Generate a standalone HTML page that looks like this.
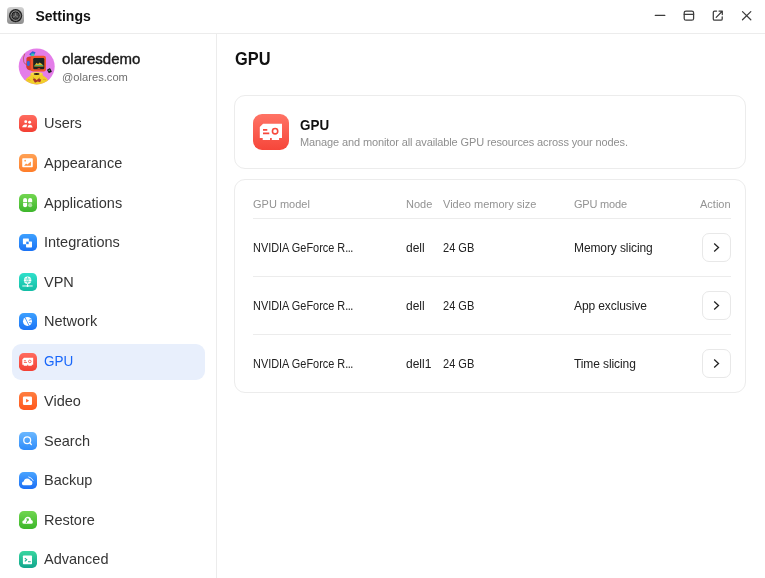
<!DOCTYPE html>
<html><head><meta charset="utf-8">
<style>
*{box-sizing:border-box;margin:0;padding:0}
html,body{width:765px;height:578px;overflow:hidden;background:#fff;font-family:"Liberation Sans",sans-serif;color:#1f1f1f}
#root{position:absolute;left:0;top:0;width:765px;height:578px;background:#fff;will-change:transform;overflow:hidden}
svg{position:absolute;overflow:visible}
#hdrline{position:absolute;left:0;top:33px;width:765px;height:1px;background:#ececec}
#sideline{position:absolute;left:216px;top:34px;width:1px;height:544px;background:#ececec}
#title{position:absolute;left:35.5px;top:7px;font-size:14px;font-weight:bold;color:#111;line-height:18px}
.uname{position:absolute;left:62px;top:50px;font-size:15px;color:#1a1a1a;line-height:18px;-webkit-text-stroke:0.4px #1a1a1a}
.udom{position:absolute;left:62px;top:70.3px;font-size:11.5px;color:#6e6e6e;line-height:14px;transform:scaleX(0.97);transform-origin:0 0}
.item{position:absolute;left:11.5px;width:193.5px;height:36px;border-radius:9px}
.item.sel{background:#e8effc}
.ic{position:absolute;left:7.5px;top:9.6px;width:17.6px;height:17.6px;border-radius:4.8px;overflow:hidden}
.ic svg{left:0;top:0;width:17.6px;height:17.6px}
.item .tx{position:absolute;left:32.5px;top:9.2px;font-size:14.5px;line-height:18px;color:#353535}
.item.sel .tx{color:#1766fa;top:8.9px;transform:scaleX(0.93);transform-origin:0 0}
.h1{position:absolute;left:235px;top:48px;font-size:18px;font-weight:bold;line-height:22px;color:#111;transform:scaleX(0.91);transform-origin:0 0}
.card{position:absolute;left:234px;width:512px;border:1px solid #ececec;border-radius:11px;background:#fff}
.gpuic{position:absolute;left:253px;top:114px;width:36px;height:36px;border-radius:9px;background:linear-gradient(#ff7365,#f6463a);overflow:hidden}
.ct{position:absolute;left:300px;top:116.5px;font-size:14px;font-weight:bold;line-height:17px;color:#111;transform:scaleX(0.96);transform-origin:0 0}
.cd{position:absolute;left:300px;top:135px;font-size:11px;line-height:14px;color:#8f8f8f;letter-spacing:-0.12px}
.th{position:absolute;font-size:11px;color:#939393;line-height:14px;top:197px}
.td{position:absolute;font-size:12px;color:#222;line-height:15px}
.nv{transform:scaleX(0.91);transform-origin:0 0}
.dots{letter-spacing:-0.6px}
.hl{position:absolute;left:253px;width:478px;height:1px;background:#ececec}
.btn{position:absolute;left:702px;width:29px;height:29px;border:1px solid #e8e8e8;border-radius:7px}
.btn svg{left:-1px;top:-1px;width:29px;height:29px}
</style></head><body>
<div id="root">
<div id="hdrline"></div>
<div id="sideline"></div>

<!-- app icon -->
<svg style="left:7px;top:7px" width="17" height="17" viewBox="0 0 17 17">
  <defs><linearGradient id="gapp" x1="0" y1="0" x2="0" y2="1"><stop offset="0" stop-color="#d4d4d4"/><stop offset="1" stop-color="#8c8c8c"/></linearGradient></defs>
  <rect x="0" y="0" width="17" height="17" rx="3.5" fill="url(#gapp)"/>
  <circle cx="8.6" cy="8.6" r="6.6" fill="#1a1a1a"/>
  <circle cx="8.6" cy="8.6" r="5.9" fill="none" stroke="#5a5a5a" stroke-width="0.6" stroke-dasharray="0.6 1"/>
  <circle cx="8.6" cy="8.6" r="4.7" fill="none" stroke="#b5b5b5" stroke-width="0.9"/>
  <circle cx="8.6" cy="8.6" r="3.2" fill="#4a4a4a"/>
  <path d="M8.6 8.6 L8.6 5.6 M8.6 8.6 L11.2 10.1 M8.6 8.6 L6 10.1" stroke="#9a9a9a" stroke-width="0.7"/>
  </svg>
<div id="title">Settings</div>

<!-- window controls -->
<svg style="left:650px;top:5px" width="110" height="22" viewBox="650 5 110 22" fill="none" stroke="#3d3d3d" stroke-width="1.25" stroke-linecap="round" stroke-linejoin="round">
  <path d="M655.3 15.4 H664.8"/>
  <rect x="684.2" y="11" width="9.4" height="9.2" rx="1.8"/>
  <path d="M684.2 14.3 H693.6"/>
  <path d="M716.6 11 H714.6 Q713.3 11 713.3 12.3 V18.9 Q713.3 20.2 714.6 20.2 H720.9 Q722.2 20.2 722.2 18.9 V16.8"/>
  <path d="M716.2 17.4 L722.2 11.2 M719 11.1 H722.3 V14.5"/>
  <path d="M742.5 11.6 L750.8 19.8 M750.8 11.6 L742.5 19.8"/>
</svg>

<!-- avatar -->
<svg style="left:17px;top:46px" width="40" height="40" viewBox="0 0 40 40">
  <defs><clipPath id="avc"><circle cx="19.7" cy="20.4" r="18"/></clipPath></defs>
  <circle cx="19.7" cy="20.4" r="18" fill="#e47de9"/>
  <g clip-path="url(#avc)">
    <path d="M7.5 40 Q8 34 10 32 Q12 30.5 13.5 29.5 L13.6 27.6 Q19.5 25.8 25.6 27.6 L25.8 29.5 Q28 30.5 29.5 32 Q31.5 34 32 40 Z" fill="#f2cf2b"/>
    <path d="M10.5 34 Q12 33 13.5 34.5 M26 33.5 Q27.5 33 29 34" stroke="#c9a21c" stroke-width="0.6" fill="none"/>
    <ellipse cx="19.6" cy="27.6" rx="6" ry="1.6" fill="#f6dc48"/>
    <ellipse cx="19.6" cy="28" rx="3" ry="0.9" fill="#2d2410"/>
    <path d="M16.5 31.6 L17.6 33.8 M22.6 31.6 L21.8 33.8" stroke="#5a4a20" stroke-width="0.5"/>
    <path d="M15.8 33.2 L18 32.6 L19.6 34.2 L21.4 32.6 L24.2 33.4 L23.2 36.2 L20.6 35.4 L18 36.8 Z" fill="#a8342a"/>
    <path d="M7.8 7.6 Q5.6 12 6.8 16 Q7.6 18.5 10 18.5" stroke="#b0583a" stroke-width="0.7" fill="none"/>
    <path d="M9.5 12 Q10 10.8 13 10.5 L15 10.3 L15 24.5 L12.5 24.2 Q9.2 23.5 9.2 20 Z" fill="#d43a2c"/>
    <rect x="10" y="14.9" width="2.7" height="5" rx="1.1" fill="#2f6be0"/>
    <rect x="13.7" y="9.7" width="15.3" height="15.9" rx="2.4" fill="#f0562c"/>
    <rect x="16.2" y="12" width="11.1" height="11.3" rx="1.2" fill="#1d2420"/>
    <path d="M17.2 20 L19.6 16.8 L21 18 L22.6 16.4 L24.6 17.8 L26.5 19.8 L26.5 20.4 L17.2 20.4 Z" fill="#e7b52a"/>
    <path d="M17.8 19.4 H26" stroke="#2fb07a" stroke-width="0.9"/>
    <rect x="20.6" y="22" width="2.6" height="0.8" fill="#e3352b"/>
    <path d="M12.2 8.2 L15.5 5.3 L18.6 6.2 L16.8 9.6 L13.5 9.6 Z" fill="#2d5fd6"/>
    <rect x="14.2" y="7.5" width="3" height="2.5" fill="#37c7b0"/>
    <rect x="30.6" y="22.6" width="3.6" height="4.2" rx="0.6" transform="rotate(-28 32.4 24.7)" fill="#1c1c1c"/>
    <rect x="31.6" y="23.8" width="1.6" height="1.2" transform="rotate(-28 32.4 24.7)" fill="#3da06a"/>
  </g>
</svg>
<div class="uname">olaresdemo</div>
<div class="udom">@olares.com</div>

<!-- menu -->
<div class="item" style="top:105.3px">
  <div class="ic" style="background:linear-gradient(#ff6b5f,#f33f33)"><svg viewBox="0 0 18 18" fill="#fff">
    <circle cx="6.9" cy="6.8" r="1.5"/><path d="M3.3 12.6 Q3.4 9.9 6.4 9.6 L7.6 9.6 Q8.6 9.8 8.2 10.6 L7.6 12.6 Z"/>
    <circle cx="10.9" cy="7.5" r="1.5"/><path d="M8.7 12.7 Q8.9 10.1 11.2 10.1 Q13.6 10.1 14 12.7 Z"/>
  </svg></div>
  <div class="tx">Users</div></div>
<div class="item" style="top:144.9px">
  <div class="ic" style="background:linear-gradient(#ffa154,#ff7e2a)"><svg viewBox="0 0 18 18">
    <rect x="3.3" y="4.4" width="10.8" height="9.1" rx="0.8" fill="#fff"/>
    <rect x="4.3" y="5.4" width="8.8" height="7.1" fill="#fff"/>
    <circle cx="6.3" cy="6.9" r="0.9" fill="#ffa04f"/>
    <path d="M5.2 11.9 L7.2 9.8 L8.6 10.8 L12.2 7.6 L12.2 11.9 Z" fill="#ff9240"/>
  </svg></div>
  <div class="tx">Appearance</div></div>
<div class="item" style="top:184.5px">
  <div class="ic" style="background:linear-gradient(#72d650,#3eb62c)"><svg viewBox="0 0 18 18" fill="#fff">
    <path d="M4.2 8.4 V6.2 Q4.2 4.2 6.2 4.2 Q8.3 4.2 8.3 6.2 V8.4 Z"/>
    <path d="M9.3 8.4 V6.2 Q9.3 4.2 11.4 4.2 Q13.5 4.2 13.5 6.2 V8.4 Z" transform="rotate(0)"/>
    <path d="M4.2 9.3 H8.3 V11.5 Q8.3 13.5 6.2 13.5 Q4.2 13.5 4.2 11.5 Z"/>
    <circle cx="11.4" cy="11.4" r="2.1" fill="#fff" fill-opacity="0.55"/>
  </svg></div>
  <div class="tx">Applications</div></div>
<div class="item" style="top:224.1px">
  <div class="ic" style="background:linear-gradient(#3da0ff,#1a72f5)"><svg viewBox="0 0 18 18">
    <rect x="4" y="4.6" width="6.1" height="6" rx="0.6" fill="#fff"/>
    <rect x="7.2" y="7.6" width="6.1" height="6.1" rx="0.6" fill="#fff"/>
    <rect x="7.4" y="7.8" width="2.5" height="2.6" fill="#2a86fa"/>
  </svg></div>
  <div class="tx">Integrations</div></div>
<div class="item" style="top:263.7px">
  <div class="ic" style="background:linear-gradient(#2fe0cb,#13bda4)"><svg viewBox="0 0 18 18">
    <circle cx="8.8" cy="7.5" r="3.8" fill="#fff"/>
    <path d="M8.8 4.2 Q7.2 7.5 8.8 10.8 Q10.4 7.5 8.8 4.2 M5.4 6.2 H12.2 M5.4 8.8 H12.2" stroke="#22cdb4" stroke-width="0.5" fill="none"/>
    <path d="M8.8 11 V13.2 M3.4 13.3 H14" stroke="#fff" stroke-width="1"/>
    <circle cx="8.8" cy="13.3" r="1" fill="#fff"/>
  </svg></div>
  <div class="tx">VPN</div></div>
<div class="item" style="top:303.3px">
  <div class="ic" style="background:linear-gradient(#3ca0ff,#1b73f5)"><svg viewBox="0 0 18 18">
    <circle cx="8.7" cy="8.6" r="4.6" fill="#fff"/>
    <path d="M6.2 4.7 L10.2 12.8 M10 7.5 L12.7 6.6 M10.4 9.6 L13 10.4" stroke="#2a86fa" stroke-width="0.8" fill="none"/>
  </svg></div>
  <div class="tx">Network</div></div>
<div class="item sel" style="top:343.6px">
  <div class="ic" style="background:linear-gradient(#ff6b5f,#f33f33)"><svg viewBox="0 0 36 36">
    <path d="M10.1 9.8 H29 V24 H26.1 V25.9 H18.8 V24 H17 V25.9 H9.7 V24 H6.8 V13.1 Z" fill="#fff"/>
    <path d="M10 15.9 H14.3 M10 19.3 H16.3" stroke="#f6493c" stroke-width="1.7"/>
    <circle cx="22.1" cy="17.2" r="2.65" fill="none" stroke="#f6493c" stroke-width="1.6"/>
  </svg></div>
  <div class="tx">GPU</div></div>
<div class="item" style="top:382.9px">
  <div class="ic" style="background:linear-gradient(#ff7e40,#ff571c)"><svg viewBox="0 0 18 18">
    <rect x="4" y="4.5" width="9.3" height="8.8" rx="1.3" fill="#fff"/>
    <path d="M7.3 7 L10.4 8.9 L7.3 10.8 Z" fill="#ff6428"/>
  </svg></div>
  <div class="tx">Video</div></div>
<div class="item" style="top:422.5px">
  <div class="ic" style="background:linear-gradient(#6bb8ff,#2f8cfa)"><svg viewBox="0 0 18 18">
    <circle cx="8.4" cy="8.4" r="3.5" fill="none" stroke="#fff" stroke-width="1.3"/>
    <path d="M11.1 11.1 L12.6 12.8" stroke="#fff" stroke-width="1.3" stroke-linecap="round"/>
  </svg></div>
  <div class="tx">Search</div></div>
<div class="item" style="top:462.1px">
  <div class="ic" style="background:linear-gradient(#49a4ff,#1b6ef5)"><svg viewBox="0 0 18 18">
    <path d="M4.6 13.6 Q3 13.6 3 11.8 Q3 10 4.8 9.8 Q5.4 6.6 8.4 6.6 Q10.8 6.6 11.7 8.8 Q13.8 8.9 13.8 11.2 Q13.8 13.6 11.6 13.6 Z" fill="#fff"/>
    <path d="M9.6 4.9 Q13.2 5.8 14.6 9" stroke="#fff" stroke-width="0.9" fill="none"/>
  </svg></div>
  <div class="tx">Backup</div></div>
<div class="item" style="top:501.7px">
  <div class="ic" style="background:linear-gradient(#70d650,#3cb62a)"><svg viewBox="0 0 18 18">
    <path d="M4.8 13 Q3.2 13 3.4 11.1 Q3.6 9.7 5.2 9.4 Q6.2 5.8 9 5.8 Q11.8 5.8 12.6 9.2 Q14.4 9.6 14.2 11.4 Q14 13 12.4 13 Z" fill="#fff"/>
    <path d="M7.6 11.8 L9.2 8.2 M7.9 8.2 H9.4 V9.6" stroke="#45bb33" stroke-width="1" fill="none" stroke-linecap="round"/>
  </svg></div>
  <div class="tx">Restore</div></div>
<div class="item" style="top:541.3px">
  <div class="ic" style="background:linear-gradient(#38d6a0,#12a58d)"><svg viewBox="0 0 18 18">
    <rect x="4" y="4.6" width="9.3" height="8.9" rx="0.7" fill="#fff"/>
    <path d="M5.9 7.3 L7.9 8.9 L5.9 10.6" stroke="#1aaa90" stroke-width="1.1" fill="none"/>
    <path d="M9.2 11 H12" stroke="#1aaa90" stroke-width="1.1"/>
  </svg></div>
  <div class="tx">Advanced</div></div>

<!-- main -->
<div class="h1">GPU</div>
<div class="card" style="top:95px;height:74px"></div>
<div class="gpuic"><svg style="left:0;top:0" width="36" height="36" viewBox="0 0 36 36">
    <path d="M10.1 9.8 H29 V24 H26.1 V25.9 H18.8 V24 H17 V25.9 H9.7 V24 H6.8 V13.1 Z" fill="#fff"/>
    <path d="M10 15.9 H14.3 M10 19.3 H16.3" stroke="#f6493c" stroke-width="1.7"/>
    <circle cx="22.1" cy="17.2" r="2.65" fill="none" stroke="#f6493c" stroke-width="1.6"/>
</svg></div>
<div class="ct">GPU</div>
<div class="cd">Manage and monitor all available GPU resources across your nodes.</div>

<div class="card" style="top:179px;height:214px"></div>
<div class="th" style="left:253px">GPU model</div>
<div class="th" style="left:406px">Node</div>
<div class="th" style="left:443px">Video memory size</div>
<div class="th" style="left:574px;letter-spacing:-0.2px">GPU mode</div>
<div class="th" style="left:700px">Action</div>
<div class="hl" style="top:218px"></div>
<div class="hl" style="top:276px"></div>
<div class="hl" style="top:334px"></div>

<div class="td nv" style="left:253px;top:240.7px">NVIDIA GeForce R<span class="dots">...</span></div>
<div class="td" style="left:406px;top:240.7px">dell</div>
<div class="td" style="left:443px;top:240.7px;transform:scaleX(0.92);transform-origin:0 0">24 GB</div>
<div class="td" style="left:574px;top:240.7px;letter-spacing:-0.1px">Memory slicing</div>
<div class="btn" style="top:233px"><svg viewBox="0 0 29 29"><path d="M12.2 10.6 L16.5 14.5 L12.2 18.4" fill="none" stroke="#222" stroke-width="1.3"/></svg></div>

<div class="td nv" style="left:253px;top:298.7px">NVIDIA GeForce R<span class="dots">...</span></div>
<div class="td" style="left:406px;top:298.7px">dell</div>
<div class="td" style="left:443px;top:298.7px;transform:scaleX(0.92);transform-origin:0 0">24 GB</div>
<div class="td" style="left:574px;top:298.7px;letter-spacing:-0.1px">App exclusive</div>
<div class="btn" style="top:291px"><svg viewBox="0 0 29 29"><path d="M12.2 10.6 L16.5 14.5 L12.2 18.4" fill="none" stroke="#222" stroke-width="1.3"/></svg></div>

<div class="td nv" style="left:253px;top:356.7px">NVIDIA GeForce R<span class="dots">...</span></div>
<div class="td" style="left:406px;top:356.7px">dell1</div>
<div class="td" style="left:443px;top:356.7px;transform:scaleX(0.92);transform-origin:0 0">24 GB</div>
<div class="td" style="left:574px;top:356.7px;letter-spacing:-0.1px">Time slicing</div>
<div class="btn" style="top:349px"><svg viewBox="0 0 29 29"><path d="M12.2 10.6 L16.5 14.5 L12.2 18.4" fill="none" stroke="#222" stroke-width="1.3"/></svg></div>
</div>
</body></html>
